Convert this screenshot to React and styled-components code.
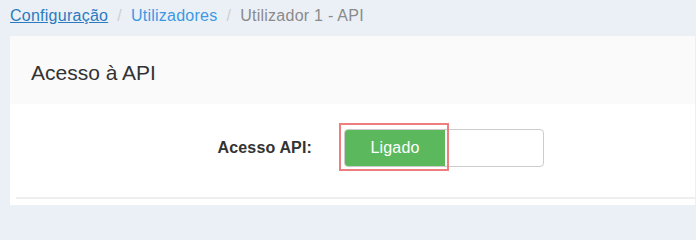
import React from "react";
import styled, { createGlobalStyle } from "styled-components";

const Global = createGlobalStyle`
  html, body { margin: 0; padding: 0; background: #ebf0f7; }
  body { font-family: "Liberation Sans", Arial, sans-serif; color: #333; }
`;

const Page = styled.div`
  width: 696px;
  height: 205px;
  overflow: hidden;
  padding-right: 1px;
  box-sizing: border-box;
`;

const Breadcrumb = styled.nav`
  display: flex;
  align-items: center;
  padding: 5px 10px 8px;
  font-size: 16px;
  line-height: 22px;
  letter-spacing: 0.25px;
`;

const Crumb = styled.a`
  color: ${(p) => (p.$underline ? "#2b7bc0" : "#3b99e4")};
  text-decoration: ${(p) => (p.$underline ? "underline" : "none")};
`;

const Current = styled.span`
  color: #8a8a8a;
`;

const Sep = styled.span`
  color: #cfcfcf;
  padding: 0 9px;
`;

const Panel = styled.section`
  margin: 1px 0 0 10px;
  background: #fff;
`;

const PanelHeader = styled.header`
  background: #fafafa;
  padding: 25px 20px 20px 21px;
`;

const Title = styled.h2`
  margin: 0;
  font-size: 21px;
  line-height: 23px;
  font-weight: 400;
  color: #333;
`;

const PanelBody = styled.div`
  padding: 25px 0 30px;
  border-bottom: 2px solid #eeeeee;
  margin-left: 6px;
`;

const FormRow = styled.div`
  display: grid;
  grid-template-columns: 296px auto;
  column-gap: 32px;
  align-items: center;
`;

const Label = styled.label`
  text-align: right;
  font-weight: 700;
  font-size: 16px;
  letter-spacing: 0.15px;
  color: #333;
`;

const ToggleWrap = styled.div`
  position: relative;
  width: 200px;
`;

const Toggle = styled.div`
  display: flex;
  width: 200px;
  height: 38px;
  box-sizing: border-box;
  border: 1px solid #cccccc;
  border-radius: 4px;
  overflow: hidden;
  background: #fff;
`;

const OnPart = styled.div`
  width: 100px;
  display: flex;
  align-items: center;
  justify-content: center;
  background: #5cb85c;
  color: #fff;
  font-size: 16px;
  letter-spacing: 0.2px;
`;

const Highlight = styled.div`
  position: absolute;
  left: -5px;
  top: -6px;
  width: 110px;
  height: 48px;
  box-sizing: border-box;
  border: 2px solid #ee7e7e;
  pointer-events: none;
`;

const Spacer = styled.div`
  height: 10px;
`;

export default function App() {
  return (
    <Page>
      <Global />
      <Breadcrumb>
        <Crumb href="#" $underline>Configuração</Crumb>
        <Sep>/</Sep>
        <Crumb href="#">Utilizadores</Crumb>
        <Sep>/</Sep>
        <Current>Utilizador 1 - API</Current>
      </Breadcrumb>
      <Panel>
        <PanelHeader>
          <Title>Acesso à API</Title>
        </PanelHeader>
        <PanelBody>
          <FormRow>
            <Label>Acesso API:</Label>
            <ToggleWrap>
              <Toggle>
                <OnPart>Ligado</OnPart>
              </Toggle>
              <Highlight />
            </ToggleWrap>
          </FormRow>
        </PanelBody>
        <Spacer />
      </Panel>
    </Page>
  );
}
